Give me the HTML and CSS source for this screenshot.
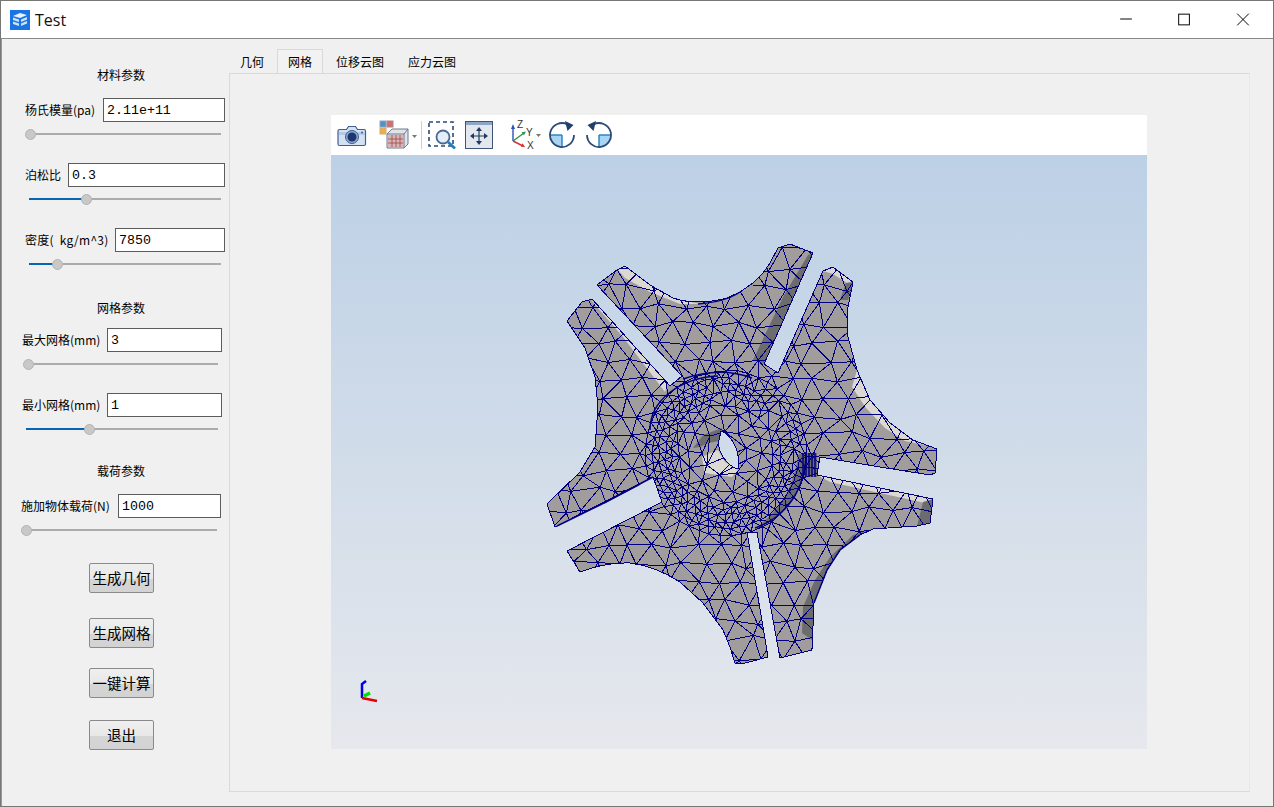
FILE: index.html
```html
<!DOCTYPE html>
<html lang="zh-CN">
<head>
<meta charset="utf-8">
<title>Test</title>
<link rel="stylesheet" href="styles.css">
</head>
<body>
<div class="window">
  <header class="titlebar">
    <svg class="app-icon" viewBox="0 0 20 20"><rect width="20" height="20" fill="#1b74e4"/><path d="M3 6l7-3 7 2-7 3z" fill="#e8f2fd"/><path d="M3 7.500l6 2v2.500l-6-2zM11 9.500l6-2.500v2.500l-6 2.500zM3 11.500l6 2v2.500l-6-2zM11 13.500l6-2.500v2.500l-6 2.500z" fill="#cfe3fa"/></svg>
    <span class="app-title">Test</span>
    <div class="win-controls">
      <svg class="win-btn" viewBox="0 0 58 38"><path d="M22 18.500h12" stroke="#000" fill="none"/></svg>
      <svg class="win-btn" viewBox="0 0 58 38"><rect x="22.500" y="13.500" width="11" height="11" stroke="#000" fill="none"/></svg>
      <svg class="win-btn" viewBox="0 0 58 38"><path d="M23 13l12 12M35 13L23 25" stroke="#000" fill="none"/></svg>
    </div>
  </header>
  <div class="main">
    <aside class="sidebar">
      <h2 class="section first">材料参数</h2>
      <div class="field field-a tight">
        <span class="label">杨氏模量(pa)</span><span class="input w122">2.11e+11</span>
      </div>
      <div class="slider slider-a"><div class="track"><div class="fill" style="width:0px"></div><div class="thumb" style="left:0px"></div></div></div>
      <div class="field field-a">
        <span class="label">泊松比</span><span class="input w157">0.3</span>
      </div>
      <div class="slider slider-b"><div class="track"><div class="fill" style="width:56px"></div><div class="thumb" style="left:56px"></div></div></div>
      <div class="field field-a">
        <span class="label label-wide">密度(  kg/m^3)</span><span class="input w110">7850</span>
      </div>
      <div class="slider slider-b"><div class="track"><div class="fill" style="width:27px"></div><div class="thumb" style="left:27px"></div></div></div>

      <h2 class="section second">网格参数</h2>
      <div class="field field-b snug">
        <span class="label">最大网格(mm)</span><span class="input w115">3</span>
      </div>
      <div class="slider slider-c"><div class="track"><div class="fill" style="width:0px"></div><div class="thumb" style="left:1px"></div></div></div>
      <div class="field field-b">
        <span class="label">最小网格(mm)</span><span class="input w115">1</span>
      </div>
      <div class="slider slider-c"><div class="track"><div class="fill" style="width:62px"></div><div class="thumb" style="left:62px"></div></div></div>

      <h2 class="section third">载荷参数</h2>
      <div class="field field-c tight">
        <span class="label">施加物体载荷(N)</span><span class="input w103">1000</span>
      </div>
      <div class="slider slider-d"><div class="track"><div class="fill" style="width:0px"></div><div class="thumb" style="left:3px"></div></div></div>

      <button class="btn btn-1">生成几何</button>
      <button class="btn btn-2">生成网格</button>
      <button class="btn btn-3">一键计算</button>
      <button class="btn btn-4">退出</button>
    </aside>
    <section class="workspace">
      <nav class="tabs">
        <span class="tab">几何</span>
        <span class="tab active">网格</span>
        <span class="tab">位移云图</span>
        <span class="tab">应力云图</span>
      </nav>
      <div class="panel">
        <div class="viewer">
          <div class="toolbar">
            <svg class="tb tb-camera" viewBox="0 0 30 24"><path d="M2.500 6.500h7l2-3h7l2 3h6.500q1.500 0 1.500 1.500v13q0 1.500-1.500 1.500h-24.500q-1.500 0-1.500-1.500v-13q0-1.500 1.500-1.500z" fill="#d3e2f3" stroke="#3f5f8f" stroke-width="1.200"/><path d="M2 9h26v3H2z" fill="#b3cbe6"/><circle cx="15" cy="14" r="6.500" fill="#8ea9cc" stroke="#3f5f8f"/><circle cx="15" cy="14" r="4.500" fill="#1c3570"/><circle cx="25" cy="9.500" r="1" fill="#3f5f8f"/></svg>
            <svg class="tb tb-grid" viewBox="0 0 38 30"><rect x="1" y="1" width="6" height="6" fill="#4f8fd8" stroke="#8aa"/><rect x="8" y="1" width="6" height="6" fill="#cf6f6f" stroke="#a88"/><rect x="1" y="8" width="6" height="6" fill="#f0b040" stroke="#ca8"/><path d="M8 14l5-5h16v15l-4 4H8z" fill="#e3e3e6" stroke="#6a7a90"/><path d="M8 14h17v14M25 14l4-5" fill="none" stroke="#6a7a90"/><path d="M9 15h15v12H9z" fill="#d9b6b6"/><path d="M9 19h15M9 23h15M13 15v12M17 15v12M21 15v12" stroke="#a0464a" stroke-width=".8" fill="none"/><path d="M33 15h5l-2.500 3z" fill="#777"/></svg>
            <span class="tb-sep"></span>
            <svg class="tb tb-square" viewBox="0 0 28 28"><rect x="1" y="1" width="24" height="24" fill="none" stroke="#2c4a78" stroke-width="1.600" stroke-dasharray="4 3"/><circle cx="15" cy="16" r="6.500" fill="#e4eef8" stroke="#4a6a94" stroke-width="1.800"/><path d="M20 21l7 6.500" stroke="#1f7fc4" stroke-width="2.800"/></svg>
            <svg class="tb tb-square" viewBox="0 0 28 28"><rect x=".5" y=".5" width="27" height="27" fill="#e3e8ef" stroke="#3f5578"/><rect x="1" y="1" width="26" height="3" fill="#8ea6c6"/><path d="M14 9v12M8 15h12" stroke="#1f3a60" stroke-width="1.200"/><path d="M14 6l-3 4h6zM14 24l-3-4h6zM5 15l4-3v6zM23 15l-4-3v6z" fill="#1f3a60"/></svg>
            <svg class="tb tb-axes" viewBox="0 0 31 30">
              <path d="M2 21V8" stroke="#2a52b8" stroke-width="1.400"/><path d="M2 4l-2 5h4z" fill="#2a52b8"/>
              <path d="M2 21l11-8" stroke="#2c9a4c" stroke-width="1.400"/><path d="M15 11.500l-4.500 0.800 2.500 3z" fill="#2c9a4c"/>
              <path d="M2 21l9 4.500" stroke="#d83030" stroke-width="1.400"/><path d="M14 27l-4.200-.2 1.800-3.500z" fill="#d83030"/>
              <text class="axis-label" x="6" y="8">Z</text><text class="axis-label" x="15" y="16">Y</text><text class="axis-label" x="16" y="29">X</text>
              <path d="M25 14h5l-2.500 3z" fill="#777"/>
            </svg>
            <svg class="tb tb-square" viewBox="0 0 28 28"><path d="M14 14v12A12 12 0 0 1 2 14z" fill="#a9d4f2"/><path d="M14 14v12" stroke="#1f7fc4" stroke-width="1.400"/><path d="M2 14h12" stroke="#1f7fc4" stroke-width="1.400"/><path d="M19.500 3.400A12 12 0 1 0 26 14" fill="none" stroke="#2c4a78" stroke-width="1.800"/><path d="M17 0l8.500 4-6 6z" fill="#22406c"/></svg>
            <svg class="tb tb-square" viewBox="0 0 28 28"><path d="M14 14v12A12 12 0 0 0 26 14z" fill="#a9d4f2"/><path d="M14 14v12" stroke="#1f7fc4" stroke-width="1.400"/><path d="M26 14H14" stroke="#1f7fc4" stroke-width="1.400"/><path d="M8.500 3.400A12 12 0 1 1 2 14" fill="none" stroke="#2c4a78" stroke-width="1.800"/><path d="M11 0L2.500 4l6 6z" fill="#22406c"/></svg>
          </div>
          <svg class="scene" viewBox="331 155 816 594">
            <defs>
              <path id="sil" fill-rule="evenodd" clip-rule="evenodd" d="M567 321L582 302L592 299L601 309L670 386L682 376L597 285L617 270L625 266L650 285L673 298Q697 306 727 298L740 292L753 283L763 273L770 263L778 248L790 244L813 253L764 364L778 373L823 271L833 267L853 282L847 312L848 337L857 370L870 400L890 423L913 440L937 449L935 473L930 475L880 467L820 457L817 475L933 499L930 523L917 526L873 529L860 535L840 550L827 570L814 603L812 650L780 658L757 532L747 532L768 657L745 663L735 663L730 647L723 630L703 603L680 582Q655 566 630 563Q607 562 580 572L567 551L662 502L653 477L555 527L547 504L580 472L595 447L598 407L595 377L585 348ZM721 431C731 435 741 450 738 469C727 466 717 452 719 440Z"/>
              <clipPath id="sil-clip"><use href="#sil"/></clipPath>
            </defs>
            <use href="#sil" class="solid"/>
            <g class="faces-light">
              <path d="M590 299L602 310L668 383L665 392L623 337Z"/>
              <path d="M618 270L625 266L650 285L673 298L700 304L680 304L650 292L625 278Z"/>
              <path d="M823 271L833 267L853 282L847 283L833 274Z"/>
              <path d="M852 387L857 370L870 400L890 423L913 440L925 445L905 441L885 428L866 408Z"/>
              <path d="M702 457L705 473L732 477L738 470L725 462L718 450Z"/>
              <path d="M817 475L933 499L925 503L830 482Z"/>
            </g>
            <g class="faces-dark">
              <path d="M813 253L808 255L783 297L753 360L764 364Z"/>
              <path d="M853 282L846 283L840 300L848 300Z"/>
              <path d="M923 502L933 499L930 523L917 526Z"/>
              <path d="M873 529L860 535L840 550L827 570L814 603L812 640L802 633L803 607L815 580L830 557L853 535Z"/>
              <path d="M693 448L703 435L722 428L719 441L708 443L700 447Z"/>
              <path d="M806 452C806 490 785 518 755 528C780 512 795 485 798 455Z"/>
              <path d="M803 453L817 453L817 477L803 477Z"/>
            </g>
            <g clip-path="url(#sil-clip)"><path id="mesh" class="mesh"/></g>
            <use href="#sil" class="outline"/>
            <g class="arcs">
              <path d="M683 379Q720 366 752 378"/>
              <path d="M698 304Q725 302 740 292"/>
              <path d="M557 526L600 505L653 477"/>
              <path d="M604 503L640 484"/>
              <path d="M806 452C806 490 785 518 755 528"/>
              <path d="M803 453v24M806 453v24M809 453v24M812 453v24M815 453v24"/>
              <path d="M650 430C650 400 680 378 718 376"/>
              <path d="M860 535L840 550L827 570L814 603"/>
            </g>
            <g class="triad">
              <path class="axis-blue" d="M362 698V684l4-3"/>
              <path class="axis-red" d="M362 698l15 3"/>
              <path class="axis-green" d="M364 696l6-3"/>
            </g>
          </svg>
        </div>
      </div>
    </section>
  </div>
</div>
<script src="mesh.js"></script>
</body>
</html>
```
FILE: styles.css
```css
* { box-sizing: border-box; }
html, body { margin: 0; padding: 0; }
body { width: 1274px; height: 807px; overflow: hidden; background: #f0f0f0; font-family: "Noto Sans CJK SC", "Liberation Sans", sans-serif; font-size: 12px; color: #000; }

.window { width: 1274px; height: 807px; border: 1px solid #777; display: flex; flex-direction: column; background: #f0f0f0; }
.titlebar { height: 38px; flex: none; background: #fff; display: flex; align-items: center; padding-left: 9px; border-bottom: 1px solid #8a8a8a; }
.app-icon { width: 20px; height: 20px; flex: none; }
.app-title { font-family: "Open Sans", "Liberation Sans", sans-serif; font-size: 16px; margin-left: 5px; color: #111; }
.win-controls { margin-left: auto; display: flex; padding-right: 1px; }
.win-btn { width: 58px; height: 37px; display: block; }

.main { flex: 1; display: flex; min-height: 0; border-left: 1px solid #999; }
.sidebar { width: 227px; flex: none; display: flex; flex-direction: column; align-items: flex-start; padding-top: 28px; }
.section { width: 100%; margin: 0; padding-left: 11px; text-align: center; font-size: 12px; font-weight: 400; line-height: 16px; height: 16px; }
.section.second { margin-top: 30px; }
.section.third { margin-top: 28px; }

.field { display: flex; justify-content: space-between; align-items: center; width: 200px; height: 24px; margin-top: 23px; flex: none; }
.field.tight { margin-top: 15px; }
.field.snug { margin-top: 12px; }
.field-a { margin-left: 23px; }
.field-b { margin-left: 20px; }
.field-c { margin-left: 19px; }
.label { white-space: pre; font-size: 12px; line-height: 16px; }
.label-wide { letter-spacing: .25px; }
.input { display: block; height: 24px; border: 1px solid #5c5c5c; background: #fff; font-family: "Liberation Mono", "DejaVu Sans Mono", monospace; font-size: 13.300px; line-height: 24px; padding-left: 3px; flex: none; }
.w122 { width: 122px; }
.w157 { width: 157px; }
.w110 { width: 110px; }
.w115 { width: 115px; }
.w103 { width: 103px; }

.slider { height: 12px; margin-top: 6px; flex: none; display: flex; align-items: center; }
.slider-a { margin-left: 27px; width: 192px; }
.slider-b { margin-left: 27px; width: 192px; }
.slider-c { margin-left: 24px; width: 192px; }
.slider-d { margin-left: 20px; width: 195px; }
.track { position: relative; width: 100%; height: 2px; background: #ababab; }
.fill { height: 2px; background: #0a64b4; }
.thumb { position: absolute; top: -4px; width: 11px; height: 11px; margin-left: -4px; border-radius: 50%; background: #c8c8c8; border: 1px solid #b4b4b4; }

.btn { display: block; flex: none; width: 65px; height: 30px; margin-left: 87px; padding: 0; border: 1px solid #8a8a8a; border-radius: 2px; background: linear-gradient(#efefef 0, #e8e8e8 52%, #d5d5d5 53%, #d3d3d3 100%); font-family: "Noto Sans CJK SC", sans-serif; font-size: 14.500px; line-height: 26px; color: #000; white-space: nowrap; }
.btn-1 { margin-top: 27px; }
.btn-2 { margin-top: 25px; }
.btn-3 { margin-top: 20px; }
.btn-4 { margin-top: 22px; }

.workspace { flex: 1; min-width: 0; display: flex; flex-direction: column; padding: 10px 23px 14px 0; }
.tabs { display: flex; gap: 2px; height: 24px; flex: none; }
.tab { padding: 0 11px; line-height: 26px; height: 24px; font-size: 12px; }
.tab.active { border: 1px solid #d9d9d9; border-bottom: 0; padding: 0 10px; line-height: 24px; background: #f2f2f2; }
.panel { flex: 1; border: 1px solid #d9d9d9; border-right-color: #e8e8e8; padding: 41px 0 0 101px; min-height: 0; }

.viewer { width: 816px; height: 634px; display: flex; flex-direction: column; }
.toolbar { height: 40px; flex: none; background: #fff; display: flex; align-items: center; padding-left: 6px; }
.tb { display: block; flex: none; }
.tb-camera { width: 30px; height: 24px; }
.tb-grid { width: 38px; height: 30px; margin-left: 12px; }
.tb-sep { width: 1px; height: 28px; background: #d0d0d0; margin-left: 4px; }
.tb-square { width: 28px; height: 28px; margin-left: 9px; }
.tb-sep + .tb-square { margin-left: 6px; }
.tb-axes { width: 31px; height: 30px; margin-left: 18px; }
.tb-axes + .tb-square { margin-left: 6px; }
.axis-label { font-family: "Liberation Sans", sans-serif; font-size: 10px; fill: #333; }

.scene { display: block; width: 816px; height: 594px; flex: none; background: linear-gradient(#bcd0e6, #e6e8ed); }
.solid { fill: #a09d9c; }
.faces-light path { fill: #dcd9d3; }
.faces-dark path { fill: #6c6b6d; }
.mesh { fill: none; stroke: #000080; stroke-width: 1; shape-rendering: crispEdges; }
.outline { fill: none; stroke: #000080; stroke-width: 1; shape-rendering: crispEdges; }
.arcs path { fill: none; stroke: #000080; stroke-width: 1.500; }
.triad path { fill: none; }
.axis-blue { stroke: #0000e0; stroke-width: 2.500; }
.axis-red { stroke: #e00000; stroke-width: 2.500; }
.axis-green { stroke: #00e000; stroke-width: 3.500; }
```
FILE: mesh.js
```js
(function () {
  var seed = 20240611;
  function rnd() {
    seed |= 0; seed = seed + 0x6D2B79F5 | 0;
    var t = Math.imul(seed ^ seed >>> 15, 1 | seed);
    t = t + Math.imul(t ^ t >>> 7, 61 | t) ^ t;
    return ((t ^ t >>> 14) >>> 0) / 4294967296;
  }
  var CX = 726, CY = 453, RX = 79, RY = 81;
  function hubDist(x, y) {
    var a = (x - CX) / RX, b = (y - CY) / RY;
    return Math.sqrt(a * a + b * b);
  }
  var pts = [];
  var row = 0;
  for (var y = 232; y < 680; y += 18.5, row++) {
    for (var x = 530; x < 955; x += 22) {
      var px = x + (row % 2 ? 11 : 0) + (rnd() - 0.5) * 9;
      var py = y + (rnd() - 0.5) * 8;
      if (hubDist(px, py) > 1.08) pts.push([px, py]);
    }
  }
  function ring(frac, spacing, jitter) {
    var r = frac * (RX + RY) / 2;
    var n = Math.round(2 * Math.PI * r / spacing);
    var off = rnd() * 6;
    for (var i = 0; i < n; i++) {
      var a = off + i / n * Math.PI * 2;
      // the fine band thins out towards the upper right of the hub
      if (frac > 0.62 && frac < 1 && Math.sin(a) < 0.1 && Math.cos(a) > -0.2 && rnd() < 0.3) continue;
      pts.push([
        CX + Math.cos(a) * frac * RX + (rnd() - 0.5) * jitter,
        CY + Math.sin(a) * frac * RY + (rnd() - 0.5) * jitter
      ]);
    }
  }
  ring(0.28, 15, 4);
  ring(0.46, 17, 5);
  ring(0.6, 13, 4);
  ring(0.69, 8, 3);
  ring(0.77, 8, 3);
  ring(0.85, 8, 3);
  ring(0.93, 8, 2);
  ring(1.02, 11, 1.5);

  function circum(a, b, c) {
    var A = pts[a], B = pts[b], C = pts[c];
    var d = 2 * (A[0] * (B[1] - C[1]) + B[0] * (C[1] - A[1]) + C[0] * (A[1] - B[1]));
    var a2 = A[0] * A[0] + A[1] * A[1], b2 = B[0] * B[0] + B[1] * B[1], c2 = C[0] * C[0] + C[1] * C[1];
    var ux = (a2 * (B[1] - C[1]) + b2 * (C[1] - A[1]) + c2 * (A[1] - B[1])) / d;
    var uy = (a2 * (C[0] - B[0]) + b2 * (A[0] - C[0]) + c2 * (B[0] - A[0])) / d;
    var dx = A[0] - ux, dy = A[1] - uy;
    return { a: a, b: b, c: c, x: ux, y: uy, r: dx * dx + dy * dy };
  }
  var n = pts.length;
  pts.push([-5000, -5000], [7000, -5000], [700, 9000]);
  var tris = [circum(n, n + 1, n + 2)];
  for (var i = 0; i < n; i++) {
    var p = pts[i], keep = [], edges = {};
    for (var t = 0; t < tris.length; t++) {
      var T = tris[t], dx = p[0] - T.x, dy = p[1] - T.y;
      if (dx * dx + dy * dy < T.r) {
        [[T.a, T.b], [T.b, T.c], [T.c, T.a]].forEach(function (e) {
          var k = Math.min(e[0], e[1]) + "_" + Math.max(e[0], e[1]);
          edges[k] = (edges[k] || 0) + 1;
        });
      } else {
        keep.push(T);
      }
    }
    for (var k in edges) {
      if (edges[k] === 1) {
        var parts = k.split("_");
        keep.push(circum(+parts[0], +parts[1], i));
      }
    }
    tris = keep;
  }
  var seen = {}, d = [];
  function edge(a, b) {
    if (a >= n || b >= n) return;
    var k = Math.min(a, b) + "_" + Math.max(a, b);
    if (seen[k]) return;
    seen[k] = 1;
    d.push("M" + pts[a][0].toFixed(1) + " " + pts[a][1].toFixed(1) + "L" + pts[b][0].toFixed(1) + " " + pts[b][1].toFixed(1));
  }
  tris.forEach(function (T) { edge(T.a, T.b); edge(T.b, T.c); edge(T.c, T.a); });
  document.getElementById("mesh").setAttribute("d", d.join(""));
})();
```
